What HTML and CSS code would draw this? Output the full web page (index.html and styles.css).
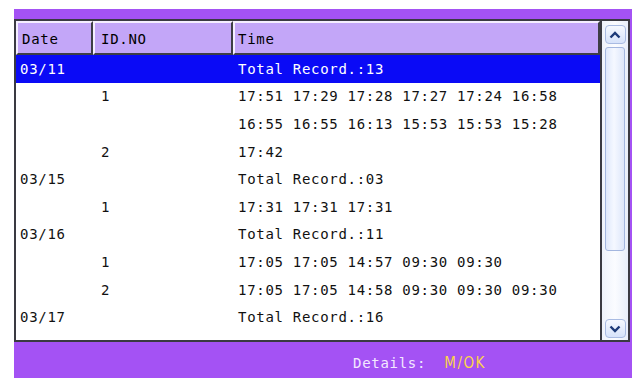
FILE: index.html
```html
<!DOCTYPE html>
<html lang="en">
<head>
    <meta charset="UTF-8">
    <title>Attendance Records</title>
    <link rel="stylesheet" href="styles.css">
</head>
<body>
    <div class="screen">
        <div class="panel">
            <div class="list">
                <div class="head">
                    <div class="hcell hdate">Date</div>
                    <div class="hcell hid">ID.NO</div>
                    <div class="hcell htime">Time</div>
                </div>
                <div class="row selected"><span class="c-date">03/11</span><span class="c-id"></span><span class="c-time">Total Record.:13</span></div>
                <div class="row"><span class="c-date"></span><span class="c-id">1</span><span class="c-time">17:51 17:29 17:28 17:27 17:24 16:58</span></div>
                <div class="row"><span class="c-date"></span><span class="c-id"></span><span class="c-time">16:55 16:55 16:13 15:53 15:53 15:28</span></div>
                <div class="row"><span class="c-date"></span><span class="c-id">2</span><span class="c-time">17:42</span></div>
                <div class="row"><span class="c-date">03/15</span><span class="c-id"></span><span class="c-time">Total Record.:03</span></div>
                <div class="row"><span class="c-date"></span><span class="c-id">1</span><span class="c-time">17:31 17:31 17:31</span></div>
                <div class="row"><span class="c-date">03/16</span><span class="c-id"></span><span class="c-time">Total Record.:11</span></div>
                <div class="row"><span class="c-date"></span><span class="c-id">1</span><span class="c-time">17:05 17:05 14:57 09:30 09:30</span></div>
                <div class="row"><span class="c-date"></span><span class="c-id">2</span><span class="c-time">17:05 17:05 14:58 09:30 09:30 09:30</span></div>
                <div class="row"><span class="c-date">03/17</span><span class="c-id"></span><span class="c-time">Total Record.:16</span></div>
            </div>
            <div class="scrollbar">
                <div class="sbtn">
                    <svg width="12" height="8" viewBox="0 0 12 8"><path d="M1.5 6.5 L6 2 L10.5 6.5" fill="none" stroke="#1d3a78" stroke-width="2.4"/></svg>
                </div>
                <div class="thumb"></div>
                <div class="track"></div>
                <div class="sbtn">
                    <svg width="12" height="8" viewBox="0 0 12 8"><path d="M1.5 1.5 L6 6 L10.5 1.5" fill="none" stroke="#1d3a78" stroke-width="2.4"/></svg>
                </div>
            </div>
        </div>
        <div class="footer">
            <span class="label">Details:  </span><span class="key">M/OK</span>
        </div>
    </div>
</body>
</html>
```

FILE: styles.css
```css
/* terminal record screen */
body {
    margin: 0;
    background-color: #fff;
    font-family: "DejaVu Sans Mono", "Liberation Mono", monospace;
    font-size: 14px;
    letter-spacing: 0.7px;
}

.screen {
    margin: 9px 0 0 14px;
    width: 618px;
    height: 369px;
    background-color: #a452f4;
    display: flex;
    flex-direction: column;
}

.panel {
    margin-top: 10px;
    margin-right: 2px;
    height: 323px;
    box-sizing: border-box;
    border: 2px solid #3a3a42;
    background-color: #fff;
    display: flex;
}

.list {
    width: 584px;
    border-right: 2px solid #3a3a42;
}

.head {
    display: grid;
    grid-template-columns: 77px 140px 1fr;
    height: 34px;
}

.hcell {
    background-color: #c3a6f8;
    border: 2px solid;
    border-color: #f4eeff #3e3e46 #3e3e46 #f4eeff;
    display: flex;
    align-items: center;
    padding-top: 1px;
    color: #000;
}

.hdate {
    padding-left: 4px;
}

.hid {
    padding-left: 6px;
}

.htime {
    padding-left: 3px;
}

.row {
    display: grid;
    grid-template-columns: 77px 140px 1fr;
    height: 27.6px;
    align-items: center;
    color: #111;
    white-space: nowrap;
}

.row.selected {
    background-color: #0a0af6;
    color: #fff;
}

.c-date {
    padding-left: 4px;
}

.c-id {
    padding-left: 8px;
}

.c-time {
    padding-left: 5px;
}

.scrollbar {
    flex: 1;
    display: flex;
    flex-direction: column;
    align-items: center;
    padding: 4px 0 2px;
    background: linear-gradient(to right, #eef2fb, #fbfcff 50%, #e8eefa);
}

.sbtn {
    width: 21px;
    height: 19px;
    box-sizing: border-box;
    border: 1px solid #a9bbe2;
    border-radius: 4px;
    background: linear-gradient(to bottom, #f6f9ff, #d6e2fa);
    display: flex;
    align-items: center;
    justify-content: center;
}

.thumb {
    margin-top: 3px;
    width: 20px;
    height: 204px;
    box-sizing: border-box;
    border: 1px solid #a3b6df;
    border-radius: 3px;
    background: linear-gradient(to right, #dfe8fb, #f5f8ff 45%, #dde6fa);
}

.track {
    flex: 1;
}

.footer {
    flex: 1;
    display: flex;
    align-items: center;
    padding: 6px 0 0 339px;
    white-space: pre;
}

.label {
    color: #f3e8ff;
}

.key {
    color: #fbd54a;
    letter-spacing: 1.5px;
    font-family: "DejaVu Sans Condensed", "DejaVu Sans", sans-serif;
    font-size: 15px;
}
```
